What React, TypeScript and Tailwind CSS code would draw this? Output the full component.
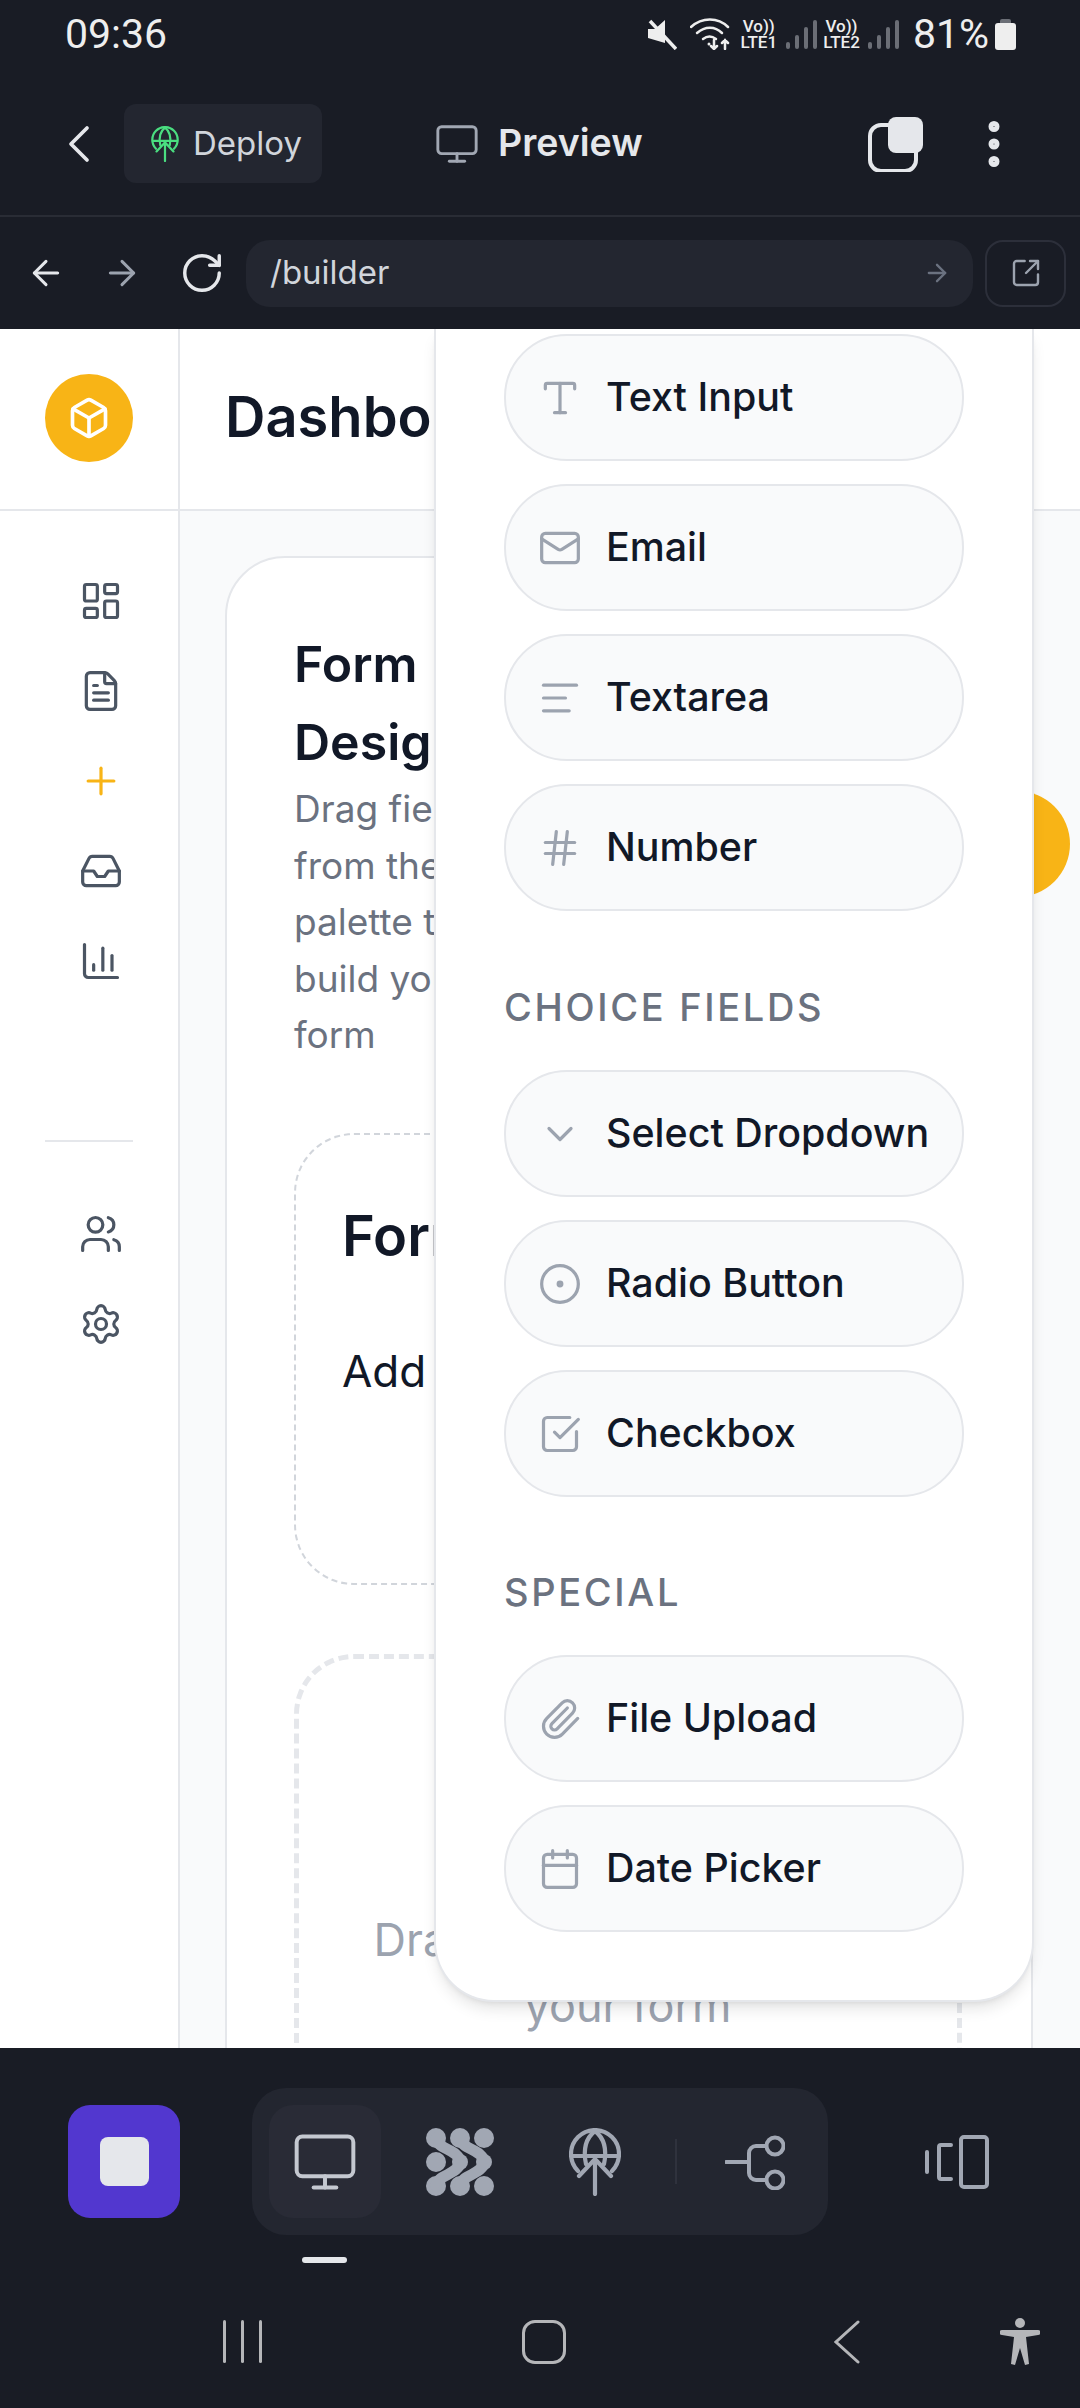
import {
  AlignLeft, ArrowLeft, ArrowRight, Box, Calendar, ChartColumn, ChevronDown, ChevronLeft, CircleDot,
  EllipsisVertical, FileText, Hash, Inbox, LayoutDashboard, Mail, Monitor, Paperclip, Plus, RotateCw,
  Settings, SquareArrowOutUpRight, SquareCheckBig, Type, Users,
} from 'lucide-react'

const basicFields = [
  { label: 'Text Input', icon: Type },
  { label: 'Email', icon: Mail },
  { label: 'Textarea', icon: AlignLeft },
  { label: 'Number', icon: Hash },
]

const choiceFields = [
  { label: 'Select Dropdown', icon: ChevronDown },
  { label: 'Radio Button', icon: CircleDot },
  { label: 'Checkbox', icon: SquareCheckBig },
]

const specialFields = [
  { label: 'File Upload', icon: Paperclip },
  { label: 'Date Picker', icon: Calendar },
]

function GlobeUp({ className }: { className: string }) {
  return (
    <svg viewBox="0 0 52 68" fill="none" stroke="currentColor" strokeWidth="4.2" strokeLinecap="round" className={className}>
      <path d="M9 43A24 24 0 1 1 43 43" />
      <path d="M3 28H49" />
      <path d="M17 36C14 22 17 10 26 3C35 10 38 22 35 36" />
      <path d="M26 66V31M10 48L26 31L42 48" />
    </svg>
  )
}

function DotsLogo() {
  return (
    <svg viewBox="0 0 68 68" fill="#a1a7b3" className="w-[68px] h-[68px]">
      <circle cx="10" cy="34" r="10" />
      <circle cx="58" cy="10" r="10" />
      <circle cx="58" cy="58" r="10" />
      <circle cx="10" cy="10" r="10" />
      <circle cx="34" cy="10" r="10" />
      <circle cx="10" cy="58" r="10" />
      <circle cx="34" cy="58" r="10" />
      <circle cx="34" cy="34" r="8" />
      <circle cx="58" cy="34" r="8" />
      <g fill="none" stroke="#a1a7b3" strokeWidth="11" strokeLinecap="round">
        <path d="M10 10C11 22 33 21 34 34C33 47 11 46 10 58" />
        <path d="M34 10C35 22 57 21 58 34C57 47 35 46 34 58" />
      </g>
    </svg>
  )
}

function BranchIcon() {
  return (
    <svg viewBox="0 0 60 56" fill="none" stroke="#a1a7b3" strokeWidth="4" strokeLinecap="round" className="w-[60px] h-[56px]">
      <path d="M1 28H24" />
      <path d="M41 12H31A7 7 0 0 0 24 19V39A7 7 0 0 0 31 46H41" />
      <circle cx="50" cy="12" r="8.5" />
      <circle cx="50" cy="46" r="8.5" />
    </svg>
  )
}

function DeviceIcon() {
  return (
    <svg viewBox="0 0 64 56" fill="none" stroke="#a1a7b3" strokeWidth="4" strokeLinecap="round" className="w-[64px] h-[56px]">
      <rect x="36" y="3" width="26" height="50" rx="3" />
      <path d="M26 11H16A2 2 0 0 0 14 13V43A2 2 0 0 0 16 45H26" />
      <path d="M2 18V38" />
    </svg>
  )
}

function TabsIcon() {
  return (
    <svg viewBox="0 0 56 56" fill="none" className="w-[56px] h-[56px]">
      <rect x="2" y="9" width="46" height="46" rx="11" stroke="#e5e7eb" strokeWidth="4" />
      <rect x="20" y="1" width="35" height="36" rx="8" fill="#e5e7eb" />
    </svg>
  )
}

function SignalBars() {
  return (
    <div className="flex items-end gap-[5px] h-[30px]">
      <div className="w-[4px] h-[7px] rounded-full bg-[#6b6e76]" />
      <div className="w-[4px] h-[14px] rounded-full bg-[#6b6e76]" />
      <div className="w-[4px] h-[22px] rounded-full bg-[#6b6e76]" />
      <div className="w-[4px] h-[29px] rounded-full bg-[#6b6e76]" />
    </div>
  )
}

function SimBlock({ name }: { name: string }) {
  return (
    <div className="flex flex-col items-center text-[17px] leading-[16px] font-medium text-[#eeeeee]">
      <span>Vo))</span>
      <span>{name}</span>
    </div>
  )
}

function StatusBar() {
  return (
    <div className="h-[60px] pt-[8px] flex items-center justify-between pl-[65px] pr-[64px] font-[Roboto,sans-serif] text-[#eeeeee]">
      <span className="text-[41px] leading-none">09:36</span>
      <div className="flex items-center">
        <svg viewBox="0 0 30 32" className="w-[30px] h-[32px]" fill="#eeeeee">
          <path d="M1 11H8L18 2V25L1 20Z" />
          <path d="M3 3L29 31" stroke="#eeeeee" strokeWidth="3.5" />
        </svg>
        <svg viewBox="0 0 46 32" fill="none" stroke="#eeeeee" strokeWidth="2.5" strokeLinecap="round" className="w-[46px] h-[32px] ml-[13px]">
          <path d="M1 9C12 -1 28 -1 38 9" />
          <path d="M7 15C15 8 25 8 32 15" />
          <path d="M13 21C17 18 22 18 26 21" />
          <path d="M24 22V31M21 28L24 31L27 28" />
          <path d="M35 31V22M32 25L35 22L38 25" />
          <circle cx="19" cy="26" r="1.5" fill="#eeeeee" stroke="none" />
        </svg>
        <div className="ml-[4px]"><SimBlock name="LTE1" /></div>
        <div className="ml-[9px]"><SignalBars /></div>
        <div className="ml-[6px]"><SimBlock name="LTE2" /></div>
        <div className="ml-[8px]"><SignalBars /></div>
        <span className="text-[41px] leading-none ml-[14px]">81%</span>
        <div className="ml-[6px] flex flex-col items-center w-[21px]">
          <div className="w-[11px] h-[4px] rounded-t-[2px] bg-[#6b6e76]" />
          <div className="w-[21px] h-[27px] rounded-[3px] bg-[#eeeeee]" />
        </div>
      </div>
    </div>
  )
}

function AppHeader() {
  return (
    <div className="h-[157px] flex items-center border-b-2 border-[#292c35] pt-[12px]">
      <ChevronLeft className="w-[64px] h-[64px] ml-[47px] text-[#e5e7eb]" strokeWidth={1.4} />
      <div className="ml-[13px] w-[198px] h-[79px] rounded-[12px] bg-[#232630] flex items-center pl-[27px] gap-[14px]">
        <GlobeUp className="w-[28px] h-[36px] text-[#4ade80]" />
        <span className="text-[33px] text-[#d1d5db]">Deploy</span>
      </div>
      <Monitor className="ml-[112px] w-[46px] h-[46px] text-[#a1a7b3]" strokeWidth={1.5} />
      <span className="ml-[18px] text-[37.5px] font-semibold text-[#e5e7eb]">Preview</span>
      <div className="ml-[225px]"><TabsIcon /></div>
      <EllipsisVertical className="ml-[40px] w-[60px] h-[60px] text-[#e5e7eb]" strokeWidth={2.4} />
    </div>
  )
}

function BrowserBar() {
  return (
    <div className="h-[112px] flex items-center pl-[26px]">
      <ArrowLeft className="w-[40px] h-[40px] text-[#e5e7eb]" strokeWidth={1.8} />
      <ArrowRight className="ml-[36px] w-[40px] h-[40px] text-[#9ca3af]" strokeWidth={1.8} />
      <RotateCw className="ml-[37px] w-[46px] h-[46px] text-[#e5e7eb]" strokeWidth={1.8} />
      <div className="ml-[21px] w-[727px] h-[67px] rounded-[24px] bg-[#232630] flex items-center justify-between pl-[24px] pr-[22px]">
        <span className="text-[33px] text-[#d1d5db]">/builder</span>
        <ArrowRight className="w-[28px] h-[28px] text-[#6b7280]" strokeWidth={2} />
      </div>
      <div className="ml-[12px] w-[81px] h-[67px] rounded-[18px] border-2 border-[#2c2f3a] flex items-center justify-center">
        <SquareArrowOutUpRight className="w-[32px] h-[32px] text-[#9ca3af]" strokeWidth={1.8} />
      </div>
    </div>
  )
}

function Sidebar() {
  return (
    <aside className="w-[180px] shrink-0 bg-white border-r-2 border-[#e5e7eb] flex flex-col pt-[68px]">
      <div className="flex flex-col gap-[46px] pl-[79px]">
        <LayoutDashboard className="w-[44px] h-[44px] text-[#4b5563]" strokeWidth={1.75} />
        <FileText className="w-[44px] h-[44px] text-[#4b5563]" strokeWidth={1.75} />
        <Plus className="w-[44px] h-[44px] text-[#f8b416]" strokeWidth={1.75} />
        <Inbox className="w-[44px] h-[44px] text-[#4b5563]" strokeWidth={1.75} />
        <ChartColumn className="w-[44px] h-[44px] text-[#4b5563]" strokeWidth={1.75} />
      </div>
      <div className="w-[88px] h-[2px] ml-[45px] mt-[157px] bg-[#e5e7eb]" />
      <div className="flex flex-col gap-[46px] pl-[79px] mt-[70px]">
        <Users className="w-[44px] h-[44px] text-[#4b5563]" strokeWidth={1.75} />
        <Settings className="w-[44px] h-[44px] text-[#4b5563]" strokeWidth={1.75} />
      </div>
    </aside>
  )
}

function FormCard() {
  return (
    <div className="ml-[45px] mt-[45px] w-[808px] bg-white border-2 border-[#e5e7eb] rounded-t-[60px] pl-[67px] pr-[69px] pt-[67px]">
      <h2 className="w-[320px] text-[50px] leading-[78px] font-semibold text-[#111827]">Form Designer</h2>
      <p className="text-[37px] leading-[56.5px] text-[#6b7280]">
        Drag fields<br />from the<br />palette to<br />build your<br />form
      </p>
      <div className="mt-[69px] h-[452px] border-2 border-dashed border-[#d1d5db] rounded-[60px] px-[46px] pt-[62px]">
        <h3 className="text-[56px] leading-[78px] font-semibold text-[#111827]">Form Title</h3>
        <p className="mt-[66px] text-[44px] leading-[60px] text-[#111827]">Add a description</p>
      </div>
      <div className="mt-[69px] h-[700px] border-[5px] border-dashed border-[#e5e7eb] rounded-[60px] pt-[248px] flex justify-center">
        <p className="w-[530px] text-center text-[45px] leading-[66px] text-[#9ca3af]">Drag fields here to build your form</p>
      </div>
    </div>
  )
}

function FieldPill({ label, icon: Icon }: { label: string; icon: typeof Type }) {
  return (
    <div className="h-[127px] rounded-[63px] border-2 border-[#e5e7eb] bg-[#f9fafb] flex items-center pl-[32px] gap-[24px]">
      <Icon className="w-[44px] h-[44px] text-[#9ca3af]" strokeWidth={1.75} />
      <span className="text-[39.4px] font-medium text-[#111827]">{label}</span>
    </div>
  )
}

function SectionLabel({ children, top }: { children: string; top: string }) {
  return <p className={`${top} mb-[36px] text-[38px] leading-[54px] font-medium tracking-[0.07em] text-[#6b7280]`}>{children}</p>
}

function PalettePanel() {
  return (
    <div className="absolute left-[434px] top-0 w-[600px] h-[1673px] bg-white border-x-2 border-b-2 border-[#e5e7eb] rounded-b-[60px] shadow-lg pl-[68px] pr-[68px] pt-[5px]">
      <div className="flex flex-col gap-[23px]">
        {basicFields.map((f) => <FieldPill key={f.label} {...f} />)}
      </div>
      <SectionLabel top="mt-[69px]">CHOICE FIELDS</SectionLabel>
      <div className="flex flex-col gap-[23px]">
        {choiceFields.map((f) => <FieldPill key={f.label} {...f} />)}
      </div>
      <SectionLabel top="mt-[68px]">SPECIAL</SectionLabel>
      <div className="flex flex-col gap-[23px]">
        {specialFields.map((f) => <FieldPill key={f.label} {...f} />)}
      </div>
    </div>
  )
}

function BottomToolbar() {
  return (
    <div className="h-[215px] relative pt-[40px] pl-[68px] flex items-start">
      <div className="mt-[17px] w-[112px] h-[113px] rounded-[22px] bg-[#5237cf] flex items-center justify-center">
        <div className="w-[49px] h-[49px] rounded-[8px] bg-[#e5e7eb]" />
      </div>
      <div className="ml-[72px] w-[576px] h-[147px] rounded-[34px] bg-[#232630] flex items-center pl-[17px]">
        <div className="w-[112px] h-[113px] rounded-[24px] bg-[#292b36] flex items-center justify-center">
          <Monitor className="w-[68px] h-[68px] text-[#c4c8d0]" strokeWidth={1.4} />
        </div>
        <div className="ml-[45px]"><DotsLogo /></div>
        <GlobeUp className="ml-[75px] w-[52px] h-[68px] text-[#a1a7b3]" />
        <div className="ml-[54px] w-[2px] h-[45px] bg-[#2f323d]" />
        <div className="ml-[48px]"><BranchIcon /></div>
      </div>
      <div className="ml-[97px] mt-[46px]"><DeviceIcon /></div>
      <div className="absolute left-[302px] top-[209px] w-[45px] h-[6px] rounded-full bg-[#e5e7eb]" />
    </div>
  )
}

function AndroidNav() {
  return (
    <div className="flex-1 flex items-center pt-[12px]">
      <div className="ml-[223px] flex gap-[15px]">
        <div className="w-[3px] h-[43px] rounded-full bg-[#b5b6b9]" />
        <div className="w-[3px] h-[43px] rounded-full bg-[#b5b6b9]" />
        <div className="w-[3px] h-[43px] rounded-full bg-[#b5b6b9]" />
      </div>
      <div className="ml-[260px] w-[44px] h-[44px] rounded-[13px] border-[3px] border-[#b5b6b9]" />
      <svg viewBox="0 0 26 44" fill="none" stroke="#b5b6b9" strokeWidth="3" strokeLinecap="round" className="ml-[268px] w-[26px] h-[44px]">
        <path d="M24 2L2 22L24 42" />
      </svg>
      <svg viewBox="0 0 40 48" fill="#b5b6b9" className="ml-[140px] w-[40px] h-[48px]">
        <circle cx="20" cy="5" r="5" />
        <path d="M2 12H38A2 2 0 0 1 38 17L26 19L29 46L25 47L20 30L15 47L11 46L14 19L2 17A2 2 0 0 1 2 12Z" />
      </svg>
    </div>
  )
}

export default function App() {
  return (
    <div className="w-[1080px] h-[2408px] flex flex-col overflow-hidden bg-[#191c25] font-[Inter,sans-serif]">
      <StatusBar />
      <AppHeader />
      <BrowserBar />

      {/* webview */}
      <div className="relative h-[1719px] shrink-0 overflow-hidden bg-white">
        <div className="h-[182px] flex border-b-2 border-[#e5e7eb]">
          <div className="w-[180px] shrink-0 border-r-2 border-[#e5e7eb] pl-[45px] pt-[45px]">
            <div className="w-[88px] h-[88px] rounded-full bg-[#f8b416] flex items-center justify-center">
              <Box className="w-[44px] h-[44px] text-white" strokeWidth={2} />
            </div>
          </div>
          <h1 className="ml-[45px] mt-[52px] text-[56px] leading-[72px] font-semibold text-[#111827]">Dashboard</h1>
        </div>
        <div className="flex h-[1537px]">
          <Sidebar />
          <div className="flex-1 bg-[#f9fafb]">
            <FormCard />
          </div>
        </div>
        {/* add button, mostly behind the palette */}
        <div className="absolute left-[964px] top-[462px] w-[106px] h-[106px] rounded-full bg-[#f8b416]" />
        <PalettePanel />
      </div>

      <BottomToolbar />
      <AndroidNav />
    </div>
  )
}
